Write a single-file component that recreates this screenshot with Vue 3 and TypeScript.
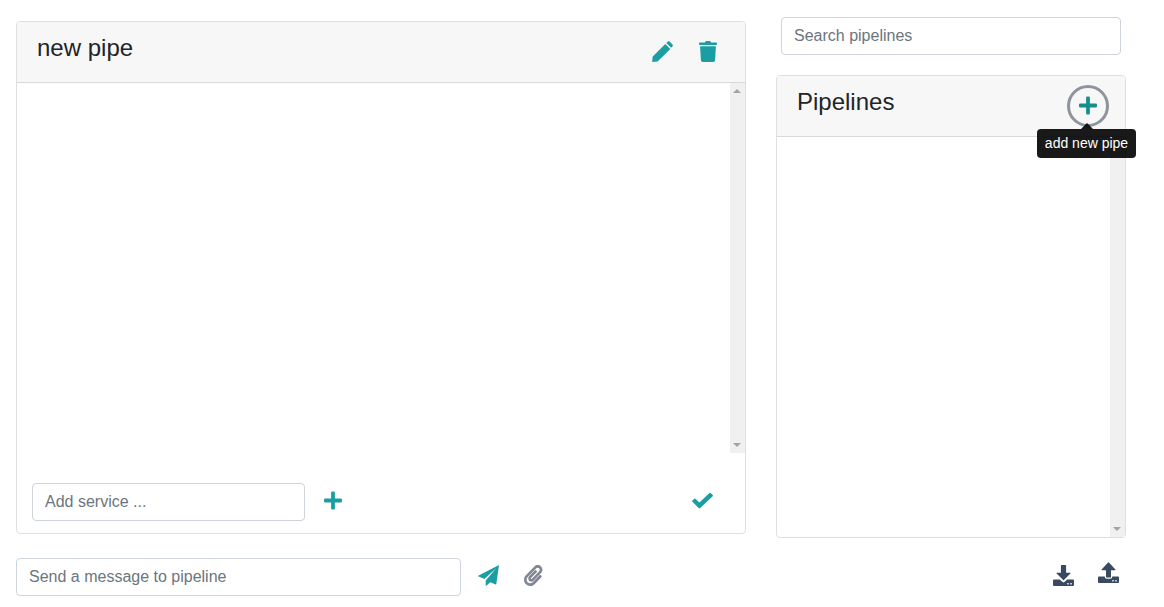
<script setup lang="ts">
import { ref } from 'vue'

interface Glyph {
  w: number
  h: number
  d: string
}

const glyphs: Record<string, Glyph> = {
  pen: {
    w: 21,
    h: 21,
    d: 'M13.3 2.9l5 5L6.1 20.1q-.3.3-.8.4L.9 21q-.7 0-.7-.6l.4-4.4q.1-.5.4-.8zM14.3 2L15.8.6q.9-.8 1.8 0l2.9 2.9q.8.9 0 1.8L19.1 6.8z',
  },
  trash: {
    w: 18,
    h: 21,
    d: 'M5.8 1.4L6.5.4Q6.7 0 7.2 0h3.6q.5 0 .7.4l.7 1h4.9q.9 0 .9.8v1q0 .8-.9.8H.9Q0 4 0 3.2v-1q0-.8.9-.8zM1.1 5.2h15.8l-.8 14q-.1 1.7-1.8 1.7H3.7q-1.7 0-1.8-1.7z',
  },
  plus: {
    w: 18,
    h: 21,
    d: 'M8.3 1.5h1.4q1.2 0 1.2 1.2v5.9h5.9q1.2 0 1.2 1.2v1.4q0 1.2-1.2 1.2h-5.9v5.9q0 1.2-1.2 1.2H8.3q-1.2 0-1.2-1.2v-5.9H1.2Q0 12.4 0 11.2V9.8q0-1.2 1.2-1.2h5.9V2.7q0-1.2 1.2-1.2z',
  },
  check: {
    w: 21,
    h: 21,
    d: 'M7.4 12.4l9.9-9.2q.8-.7 1.6 0l1.8 1.8q.5.6 0 1.2L8.2 18q-.8.7-1.6 0L.4 11.8q-.6-.6 0-1.2l1.7-1.7q.8-.7 1.6 0z',
  },
  plane: {
    w: 21,
    h: 21,
    d: 'M21 0L.2 10.7q-.4.3 0 .6l6.2 2.8L18.2 3.2 7.7 15.6v5q.1.7.6.2l4-3.5 5.4 2.1q.5.1.6-.4z',
  },
  clip: {
    w: 448,
    h: 512,
    d: 'M43.246 466.142c-58.43-60.289-57.341-157.511 1.386-217.581L254.392 34c44.316-45.332 116.351-45.336 160.671 0 43.89 44.894 43.943 117.329 0 162.276L232.214 383.128c-29.855 30.537-78.633 30.111-107.982-.998-28.275-29.97-27.368-77.473 1.452-106.953l143.743-146.835c6.182-6.314 16.312-6.422 22.626-.241l22.861 22.379c6.315 6.182 6.422 16.312.241 22.626L171.427 319.927c-4.932 5.045-5.236 13.428-.648 18.292 4.372 4.634 11.245 4.711 15.688.165l182.849-186.851c19.613-20.062 19.613-52.725-.011-72.798-19.189-19.627-49.957-19.637-69.154 0L90.39 293.295c-34.763 35.56-35.299 93.12-1.191 128.313 34.01 35.093 88.985 35.137 123.058.286l172.06-175.999c6.177-6.319 16.307-6.433 22.626-.256l22.877 22.364c6.319 6.177 6.434 16.307.256 22.626l-172.06 175.998c-59.576 60.938-155.943 60.216-214.77-.485z',
  },
  download: {
    w: 21,
    h: 21,
    d: 'M8.4 0h4.2q.5 0 .5.6v7.1h4q.9.1.3.8l-6.5 6.6q-.4.4-.8 0L3.6 8.5q-.6-.7.3-.8h4V.6q0-.6.5-.6zM1 14.4h5.8l2.8 2.7q.9.8 1.8 0l2.8-2.7H20q1 0 1 1V20q0 1-1 1H1q-1 0-1-1v-4.6q0-1 1-1zM14.3 18v1.4h1.4V18zm3 0v1.4h1.4V18z',
  },
  upload: {
    w: 21,
    h: 21,
    d: 'M8.6 15.6q-.6 0-.6-.6V8.2H4q-1-.1-.4-.8L10.1.4q.4-.4.8 0l6.5 7q.6.7-.4.8h-4V15q0 .6-.6.6zM1 14.4h5.8v.6q0 1.8 1.8 1.8h3.8q1.8 0 1.8-1.8v-.6H20q1 0 1 1V20q0 1-1 1H1q-1 0-1-1v-4.6q0-1 1-1zM14.3 18v1.4h1.4V18zm3 0v1.4h1.4V18z',
  },
}

const box = (name: string) => `0 0 ${glyphs[name].w} ${glyphs[name].h}`

const search = ref('')
const service = ref('')
const message = ref('')
</script>

<template>
  <main class="page">
    <section class="editor">
      <div class="card editor-card">
        <header class="card-header">
          <h4>new pipe</h4>
          <div class="header-tools">
            <button class="icon-btn" aria-label="edit"><svg :viewBox="box('pen')"><path :d="glyphs.pen.d" /></svg></button>
            <button class="icon-btn" aria-label="delete"><svg :viewBox="box('trash')"><path :d="glyphs.trash.d" /></svg></button>
          </div>
        </header>
        <div class="scroll-area editor-scroll">
          <div class="scrollbar"><i class="up"></i><i class="down"></i></div>
        </div>
        <div class="service-row">
          <input v-model="service" class="field service" placeholder="Add service ..." />
          <button class="icon-btn add" aria-label="add service"><svg :viewBox="box('plus')"><path :d="glyphs.plus.d" /></svg></button>
          <button class="icon-btn confirm" aria-label="confirm"><svg :viewBox="box('check')"><path :d="glyphs.check.d" /></svg></button>
        </div>
      </div>
      <div class="message-row">
        <input v-model="message" class="field message" placeholder="Send a message to pipeline" />
        <button class="icon-btn send" aria-label="send"><svg :viewBox="box('plane')"><path :d="glyphs.plane.d" /></svg></button>
        <button class="icon-btn muted" aria-label="attach"><svg :viewBox="box('clip')"><path :d="glyphs.clip.d" /></svg></button>
      </div>
    </section>

    <aside class="sidebar">
      <input v-model="search" class="field search" placeholder="Search pipelines" />
      <div class="card list-card">
        <header class="card-header">
          <h4>Pipelines</h4>
          <div class="new-pipe">
            <button class="icon-btn ring" aria-label="add pipe"><svg :viewBox="box('plus')"><path :d="glyphs.plus.d" /></svg></button>
            <div class="tooltip">add new pipe</div>
          </div>
        </header>
        <div class="scroll-area list-scroll">
          <div class="scrollbar"><i class="up"></i><i class="down"></i></div>
        </div>
      </div>
      <div class="transfer-row">
        <button class="icon-btn dark" aria-label="download"><svg :viewBox="box('download')"><path fill-rule="evenodd" :d="glyphs.download.d" /></svg></button>
        <button class="icon-btn dark raised" aria-label="upload"><svg :viewBox="box('upload')"><path fill-rule="evenodd" :d="glyphs.upload.d" /></svg></button>
      </div>
    </aside>
  </main>
</template>

<style>
body {
  background: #fff;
  overflow: hidden;
}
</style>

<style scoped>
* {
  box-sizing: border-box;
}
.page {
  display: flex;
  gap: 30px;
  width: 1164px;
  height: 607px;
  padding: 0 38px 0 16px;
  font: 16px/1.5 "Liberation Sans", Arial, sans-serif;
  color: #212529;
}
.editor {
  width: 730px;
  padding-top: 21px;
}
.sidebar {
  width: 350px;
  padding-top: 17px;
}
.card {
  display: flex;
  flex-direction: column;
  border: 1px solid #dfdfdf;
  border-radius: 4px;
  background: #fff;
}
.editor-card {
  height: 513px;
}
.list-card {
  height: 463px;
  margin-top: 20px;
}
.card-header {
  display: flex;
  justify-content: space-between;
  height: 61px;
  flex: none;
  padding: 12px 15px 0 20px;
  background: #f7f7f7;
  border-bottom: 1px solid #d9d9d9;
  border-radius: 3px 3px 0 0;
}
h4 {
  margin: 0;
  font-size: 24px;
  font-weight: 500;
  line-height: 28.8px;
}
.header-tools {
  display: flex;
  gap: 3px;
  margin: -4px 1.5px 0 0;
}
.icon-btn {
  display: flex;
  align-items: center;
  justify-content: center;
  width: 42px;
  height: 42px;
  flex: none;
  padding: 0;
  border: 0;
  border-radius: 50%;
  background: none;
  color: #1b9ea3;
}
.icon-btn svg {
  display: block;
  height: 21px;
  fill: currentColor;
}
.scroll-area {
  display: flex;
  justify-content: flex-end;
}
.editor-scroll {
  height: 370px;
}
.list-scroll {
  flex: 1;
}
.scrollbar {
  display: flex;
  flex-direction: column;
  justify-content: space-between;
  align-items: center;
  width: 15px;
  padding: 6px 1px 6px 0;
  background: #f0f0f0;
}
.up,
.down {
  width: 0;
  height: 0;
  border: 4px solid transparent;
}
.up {
  border-top: 0;
  border-bottom-color: #a3a3a3;
}
.down {
  border-bottom: 0;
  border-top-color: #a3a3a3;
}
.service-row {
  display: flex;
  align-items: center;
  margin-top: 30px;
  padding: 0 21.5px 0 15px;
}
.field {
  height: 38px;
  padding: 6px 12px;
  border: 1px solid #ced4da;
  border-radius: 4px;
  background: #fff;
  font: inherit;
  color: #495057;
  outline: none;
}
.field::placeholder {
  color: #6c757d;
  opacity: 1;
}
.service {
  width: 273px;
}
.service-row .icon-btn {
  height: 38px;
  padding-bottom: 3px;
}
.add {
  margin-left: 7px;
}
.confirm {
  margin-left: auto;
}
.message-row {
  display: flex;
  align-items: center;
  margin-top: 24px;
}
.message-row .icon-btn {
  height: 38px;
  padding-bottom: 3px;
}
.message {
  width: 445px;
}
.send {
  margin: 0 3px 0 6.5px;
}
.muted {
  color: #808692;
}
.search {
  display: block;
  width: 340px;
  margin-left: 5px;
}
.new-pipe {
  position: relative;
  margin: -3.5px 1.5px 0 0;
}
.ring {
  border: 3px solid #8d949b;
  color: #158f8e;
}
.tooltip {
  position: absolute;
  z-index: 1;
  top: 44.5px;
  left: -29.5px;
  width: 99px;
  height: 29px;
  border-radius: 4px;
  background: rgba(0, 0, 0, 0.9);
  color: #fff;
  font-size: 14px;
  line-height: 29px;
  text-align: center;
  white-space: nowrap;
}
.tooltip::before {
  content: "";
  position: absolute;
  bottom: 100%;
  left: 43.5px;
  border: 6px solid transparent;
  border-top: 0;
  border-bottom-color: rgba(0, 0, 0, 0.9);
}
.transfer-row {
  display: flex;
  justify-content: flex-end;
  gap: 3px;
  margin-top: 16.5px;
}
.dark {
  color: #39495f;
}
.transfer-row .icon-btn:last-child {
  margin-right: -3.5px;
}
.raised svg {
  margin-bottom: 6px;
}
</style>
